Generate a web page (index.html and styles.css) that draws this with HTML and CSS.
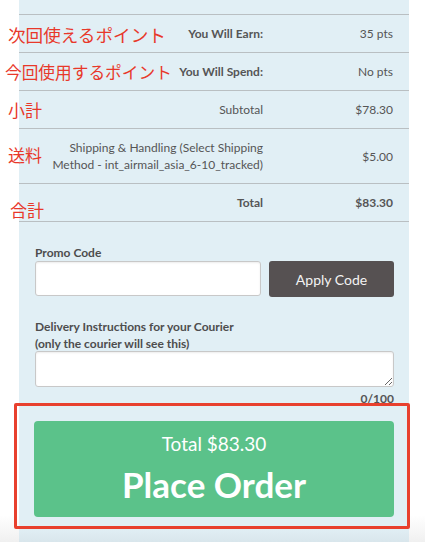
FILE: index.html
```html
<!DOCTYPE html>
<html lang="ja">
<head>
<meta charset="utf-8">
<title>Order Summary</title>
<link rel="stylesheet" href="styles.css">
</head>
<body>
<div class="page">
  <div class="panel">
    <div class="totals">
      <div class="row">
        <div class="label strong">You Will Earn:</div>
        <div class="value">35 pts</div>
      </div>
      <div class="row">
        <div class="label strong">You Will Spend:</div>
        <div class="value">No pts</div>
      </div>
      <div class="row">
        <div class="label">Subtotal</div>
        <div class="value">$78.30</div>
      </div>
      <div class="row tall">
        <div class="label">Shipping &amp; Handling (Select Shipping Method - int_airmail_asia_6-10_tracked)</div>
        <div class="value">$5.00</div>
      </div>
      <div class="row">
        <div class="label strong">Total</div>
        <div class="value strong">$83.30</div>
      </div>
    </div>

    <div class="form">
      <div class="field">
        <div class="field-label">Promo Code</div>
        <div class="promo">
          <input class="input" type="text">
          <button class="apply">Apply Code</button>
        </div>
      </div>
      <div class="field delivery">
        <div class="field-label">Delivery Instructions for your Courier<br>(only the courier will see this)</div>
        <textarea class="textarea"></textarea>
        <div class="counter">0/100</div>
      </div>
    </div>

    <div class="order">
      <button class="place">
        <span class="place-total">Total $83.30</span>
        <span class="place-text">Place Order</span>
      </button>
    </div>
  </div>

  <div class="note n1">次回使えるポイント</div>
  <div class="note n2">今回使用するポイント</div>
  <div class="note n3">小計</div>
  <div class="note n4">送料</div>
  <div class="note n5">合計</div>
  <div class="highlight"></div>
</div>
</body>
</html>
```

FILE: styles.css
```css
* { box-sizing: border-box; }
html, body {
  margin: 0;
  padding: 0;
  height: 100%;
}
body {
  background: linear-gradient(to bottom, #ffffff 0, #ffffff 515px, #f0f0f0 542px);
  font-family: Lato, "Noto Sans", sans-serif;
  color: #555555;
  overflow: hidden;
}
.page {
  position: relative;
  width: 425px;
  height: 542px;
}
.panel {
  margin-left: 19px;
  width: 390px;
  height: 542px;
  background: linear-gradient(to bottom, #e1eff5 0, #e1eff5 528px, #d9e6ec 542px);
  padding-top: 14px;
}
.totals {
  border-top: 1px solid #b9bfc2;
}
.row {
  display: grid;
  grid-template-columns: 244px 130px;
  align-items: center;
  height: 38px;
  border-bottom: 1px solid #b9bfc2;
  font-size: 12px;
}
.row.tall {
  height: 55px;
}
.label {
  text-align: right;
  padding-left: 8px;
  line-height: 17px;
}
.value {
  text-align: right;
}
.strong {
  font-weight: 700;
}
.form {
  padding: 22px 15px 0 16px;
}
.field-label {
  font-size: 12px;
  font-weight: 700;
  line-height: 17px;
  color: #4d4d4d;
}
.promo {
  display: flex;
  gap: 8px;
}
.input {
  width: 226px;
  height: 35px;
  border: 1px solid #c8c8c8;
  border-radius: 3px;
  background: #ffffff;
  box-shadow: inset 0 1px 2px rgba(0,0,0,0.08);
}
.apply {
  flex: 1;
  height: 36px;
  border: none;
  border-radius: 3px;
  background: #565152;
  color: #f3f3f3;
  font-family: Lato, sans-serif;
  font-size: 14px;
}
.delivery {
  margin-top: 21px;
}
.textarea {
  display: block;
  width: 359px;
  height: 36px;
  margin-top: -1px;
  border: 1px solid #c8c8c8;
  border-radius: 3px;
  background: #ffffff;
  resize: vertical;
  box-shadow: inset 0 1px 2px rgba(0,0,0,0.08);
}
.counter {
  text-align: right;
  font-size: 12px;
  font-weight: 700;
  margin-top: 5px;
  line-height: 14px;
}
.order {
  padding: 15px 15px 0 15px;
}
.place {
  display: flex;
  flex-direction: column;
  align-items: center;
  width: 360px;
  height: 96px;
  border: none;
  border-radius: 4px;
  background: #5bc28a;
  color: #ffffff;
  font-family: Lato, sans-serif;
  padding-top: 10px;
}
.place-total {
  font-size: 19px;
  line-height: 26px;
}
.place-text {
  font-size: 35px;
  font-weight: 700;
  line-height: 46px;
  margin-top: 4px;
}
.note {
  position: absolute;
  color: #e8382a;
  font-family: "Noto Sans CJK JP", sans-serif;
  font-size: 17px;
  line-height: 20px;
  white-space: nowrap;
}
.n1 { left: 8px; top: 25px; font-size: 17.6px; }
.n2 { left: 5px; top: 62px; font-size: 16.7px; }
.n3 { left: 8px; top: 100px; }
.n4 { left: 8px; top: 145px; }
.n5 { left: 10px; top: 200px; }
.highlight {
  position: absolute;
  left: 14px;
  top: 403px;
  width: 396px;
  height: 126px;
  border: 3px solid #e8402e;
  border-radius: 2px;
}
```
